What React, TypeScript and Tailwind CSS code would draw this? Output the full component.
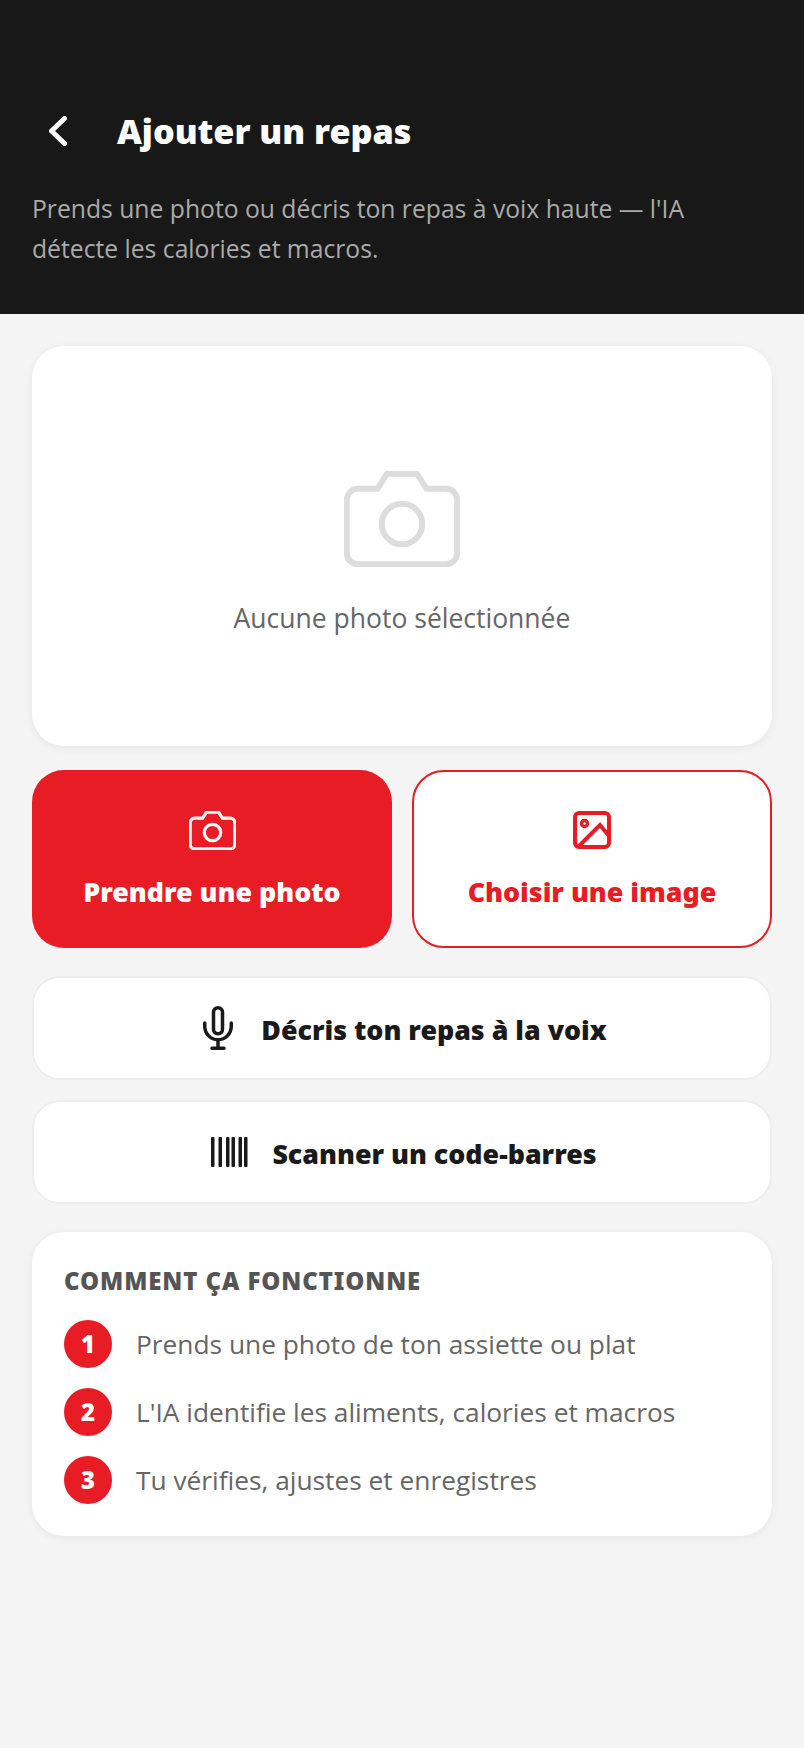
const font = "font-['Open_Sans','Noto_Sans',sans-serif]";
const heavy = "font-['Noto_Sans','Open_Sans',sans-serif] font-black";

function CameraIcon({ className, strokeWidth }: { className: string; strokeWidth: number }) {
  return (
    <svg viewBox="0 0 116 96" fill="none" stroke="currentColor" strokeWidth={strokeWidth} className={className}>
      <path d="M14 17.750H33.500L43 2.750H73L82.500 17.750H102A11.250 11.250 0 0 1 113.250 29V82A11.250 11.250 0 0 1 102 93.250H14A11.250 11.250 0 0 1 2.750 82V29A11.250 11.250 0 0 1 14 17.750Z" />
      <circle cx="58" cy="53" r="20.250" />
    </svg>
  );
}

function ImageIcon() {
  return (
    <svg viewBox="0 0 38 38" fill="none" stroke="currentColor" strokeWidth="4" className="h-[38px] w-[38px]">
      <rect x="2" y="2" width="34" height="34" rx="4" />
      <circle cx="11.500" cy="12.500" r="3" strokeWidth="3.500" />
      <path d="M5 36 27 14 36 25" />
    </svg>
  );
}

function MicIcon() {
  return (
    <svg viewBox="0 0 30 44" fill="none" stroke="currentColor" strokeWidth="3.500" strokeLinecap="round" className="h-[44px] w-[30px]">
      <rect x="10.500" y="1.750" width="9" height="26" rx="4.500" />
      <path d="M1.750 17v3.500a13.250 13.250 0 0 0 26.500 0V17M15 34v8.250M9 42.250h12" />
    </svg>
  );
}

function BarcodeIcon() {
  return (
    <svg viewBox="0 0 37 30" fill="currentColor" className="h-[30px] w-[37px]">
      <rect x="0" y="0" width="3.500" height="30" rx="1" />
      <rect x="7.500" y="0" width="3.500" height="30" rx="1" />
      <rect x="15" y="0" width="3.500" height="30" rx="1" />
      <rect x="20.500" y="0" width="3.500" height="30" rx="1" />
      <rect x="27.500" y="0" width="3.500" height="30" rx="1" />
      <rect x="33" y="0" width="3.500" height="30" rx="1" />
    </svg>
  );
}

const steps = [
  "Prends une photo de ton assiette ou plat",
  "L'IA identifie les aliments, calories et macros",
  "Tu vérifies, ajustes et enregistres",
];

export default function App() {
  return (
    <div className={`${font} min-h-[1748px] bg-[#f4f4f4]`}>
      <header className="h-[314px] bg-[#181818] px-8 pt-[107px]">
        <div className="flex h-[48px] items-center">
          <svg viewBox="0 0 18 30" fill="none" stroke="white" strokeWidth="5" strokeLinecap="round" strokeLinejoin="round" className="ml-[17px] h-[30px] w-[18px]">
            <path d="M15.500 2.500 2.500 15 15.500 27.500" />
          </svg>
          <h1 className={`${heavy} ml-[50px] text-[34.200px] text-white`}>Ajouter un repas</h1>
        </div>
        <p className="mt-[34px] text-[24.700px] leading-[40px] text-[#aaaaaa]">
          Prends une photo ou décris ton repas à voix haute — l'IA détecte les calories et macros.
        </p>
      </header>

      <main className="flex flex-col px-8 pt-8">
        <div className="flex h-[400px] flex-col items-center justify-center rounded-[32px] bg-white shadow-[0_2px_8px_rgba(0,0,0,0.06)]">
          <CameraIcon className="mt-4 h-[96px] w-[116px] text-[#dddddd]" strokeWidth={6} />
          <p className="mt-[33px] mb-[2px] text-[26.500px] leading-[36px] text-[#666666]">Aucune photo sélectionnée</p>
        </div>

        <div className="mt-6 grid grid-cols-2 gap-5">
          <button className="flex h-[178px] flex-col items-center justify-center rounded-[32px] bg-[#e81c25] pt-[3px] text-white">
            <CameraIcon className="h-[39px] w-[47px]" strokeWidth={8} />
            <span className={`${heavy} mt-[24px] text-[26.800px] leading-[36px]`}>Prendre une photo</span>
          </button>
          <button className="flex h-[178px] flex-col items-center justify-center rounded-[32px] border-2 border-[#e81c25] bg-white pt-[3px] text-[#e81c25]">
            <ImageIcon />
            <span className={`${heavy} mt-[25px] text-[26.800px] leading-[36px]`}>Choisir une image</span>
          </button>
        </div>

        <button className="mt-[28px] flex h-[104px] items-center justify-center gap-7 rounded-[28px] border-2 border-[#eeeeee] bg-white pl-[6px] text-[#1a1a1a]">
          <MicIcon />
          <span className={`${heavy} pt-1 text-[26.800px]`}>Décris ton repas à la voix</span>
        </button>
        <button className="mt-[20px] flex h-[104px] items-center justify-center gap-6 rounded-[28px] border-2 border-[#eeeeee] bg-white pl-[4px] text-[#1a1a1a]">
          <BarcodeIcon />
          <span className={`${heavy} pt-1 text-[26.800px]`}>Scanner un code-barres</span>
        </button>

        <section className="mt-[28px] rounded-[32px] bg-white px-8 pb-8 pt-[32px] shadow-[0_2px_8px_rgba(0,0,0,0.06)]">
          <h2 className={`${heavy} text-[24px] leading-[34px] tracking-[0.900px] text-[#555555]`}>COMMENT ÇA FONCTIONNE</h2>
          <ul className="mt-[22px] flex flex-col gap-5">
            {steps.map((step, i) => (
              <li key={step} className="flex items-center gap-6">
                <span className={`${heavy} flex h-[48px] w-[48px] items-center justify-center rounded-full bg-[#e81c25] text-[24px] text-white`}>
                  {i + 1}
                </span>
                <span className="pt-[1px] text-[26.300px] text-[#666666]">{step}</span>
              </li>
            ))}
          </ul>
        </section>
      </main>
    </div>
  );
}
